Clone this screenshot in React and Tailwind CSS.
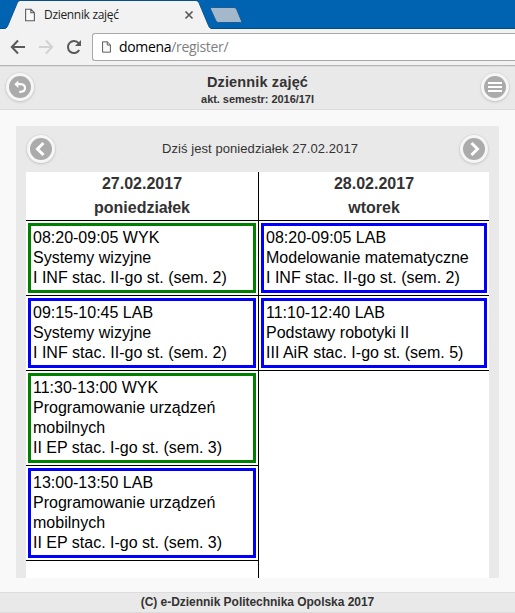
import React from "react";

const days = [
  {
    date: "27.02.2017",
    name: "poniedziałek",
    items: [
      { kind: "WYK", lines: ["08:20-09:05 WYK", "Systemy wizyjne", "I INF stac. II-go st. (sem. 2)"] },
      { kind: "LAB", lines: ["09:15-10:45 LAB", "Systemy wizyjne", "I INF stac. II-go st. (sem. 2)"] },
      { kind: "WYK", lines: ["11:30-13:00 WYK", "Programowanie urządzeń mobilnych", "II EP stac. I-go st. (sem. 3)"] },
      { kind: "LAB", lines: ["13:00-13:50 LAB", "Programowanie urządzeń mobilnych", "II EP stac. I-go st. (sem. 3)"] },
    ],
  },
  {
    date: "28.02.2017",
    name: "wtorek",
    items: [
      { kind: "LAB", lines: ["08:20-09:05 LAB", "Modelowanie matematyczne", "I INF stac. II-go st. (sem. 2)"] },
      { kind: "LAB", lines: ["11:10-12:40 LAB", "Podstawy robotyki II", "III AiR stac. I-go st. (sem. 5)"] },
    ],
  },
];

function PageIcon({ className }) {
  return (
    <svg className={className} viewBox="0 0 11 14" fill="none" stroke="#5a5a5a" strokeWidth="1.2">
      <path d="M.7.7H6.6L10.3 4.4V13.3H.7Z M6.4.7V4.6H10.3" fill="#fafafa" />
    </svg>
  );
}

function RoundButton({ label, children }) {
  return (
    <button
      aria-label={label}
      className="flex h-7 w-7 shrink-0 items-center justify-center rounded-full bg-[#f6f6f6] shadow-[0_0_0_1px_rgba(0,0,0,0.03),0_1px_3px_rgba(0,0,0,0.15)]"
    >
      <svg className="h-[22px] w-[22px]" viewBox="0 0 22 22" fill="none">
        <circle cx="11" cy="11" r="11" fill="#ababab" />
        {children}
      </svg>
    </button>
  );
}

function Lesson({ item }) {
  const color = item.kind === "WYK" ? "border-[#008000]" : "border-[#0000ff]";
  return (
    <div className="border-b border-black p-[2px]">
      <div className={"border-[3px] p-[2px] text-[16px] leading-5 text-black " + color}>
        {item.lines.map((line) => (
          <div key={line}>{line}</div>
        ))}
      </div>
    </div>
  );
}

function Browser() {
  return (
    <div className="font-['Open_Sans','Noto_Sans',sans-serif]">
      <div className="relative h-[29px] border-b border-[#0a4a85] bg-[#0063b1]">
        <svg className="absolute left-0 top-0 h-[29px] w-[250px]" viewBox="0 0 250 29">
          <path d="M0 29V28.5H5.5C7 28 7.5 26.500 8 25L17 3.500C17.600 1.800 18.500 1 20 1H196C197.800 1 198.600 2 199.300 3.500L208.500 25.500C209.300 27.500 210 28.500 212 28.500V29Z" fill="#f2f2f2" />
          <path d="M0 28.500H4C6.500 28.500 7 27 8 25L17 3.500C17.600 1.500 18.500.5 20 .5H196C197.800.5 198.600 1.500 199.300 3.500L208.500 25.500C209.300 27.500 210 28.500 212 28.500" fill="none" stroke="#0a4f8d" />
          <path d="M211.500 7.500H234Q235.800 7.500 236.500 9L241.500 21Q242 22.500 240.500 22.500H218.500Q216.700 22.500 216 21L210.500 9Q210 7.500 211.500 7.500Z" fill="#a3b9cb" stroke="#1b5c98" />
          <path d="M185.500 11.500L192.500 18.500M192.500 11.500L185.500 18.500" stroke="#5a5a5a" strokeWidth="1.700" />
        </svg>
        <div className="relative flex h-[29px] items-center pl-[25px]">
          <PageIcon className="h-[14px] w-[10px]" />
          <span className="ml-[9px] text-[12px] leading-4 tracking-[-0.32px] text-[#222]">Dziennik zajęć</span>
        </div>
      </div>
      <div className="flex h-[37px] border-b border-[#b6b4b6] bg-[#f2f2f2] pl-[10px] pt-1">
        <svg className="h-7 w-[72px]" viewBox="0 0 72 28" fill="none" strokeWidth="2">
          <path d="M15 14H2M8 7.500L1.800 14L8 20.500" stroke="#5a5a5a" />
          <path d="M29 14H42M36 7.500L42.200 14L36 20.500" stroke="#d2d2d2" />
          <path d="M69.200 17A6 6 0 1 1 68.600 10.200" stroke="#5a5a5a" />
          <path d="M71 7V13H65Z" fill="#5a5a5a" />
        </svg>
        <div className="ml-[10px] flex h-7 grow items-center rounded-l-[3px] border border-r-0 border-[#a9a9a9] bg-white pl-[9px]">
          <PageIcon className="h-3 w-[9px]" />
          <span className="ml-2 text-[14px] leading-5 tracking-[-0.32px] text-[#808080]">
            <span className="text-black">domena</span>/register/
          </span>
        </div>
      </div>
    </div>
  );
}

export default function App() {
  return (
    <div className="flex h-[613px] w-[515px] flex-col overflow-hidden bg-[#f9f9f9] font-['Liberation_Sans',Arial,sans-serif] text-[#333]">
      <Browser />
      <header className="flex h-11 items-start justify-between border-y border-[#ddd] bg-[#e9e9e9] px-[6px] pt-[6px]">
        <RoundButton label="Wstecz">
          <path d="M8 8.200H11.800C17.500 8.200 17.500 15.800 11.500 15.800H10.300" stroke="#fff" strokeWidth="2.200" />
          <path d="M5.300 8.200L9.300 4.400V12Z" fill="#fff" />
        </RoundButton>
        <div className="flex flex-col items-center font-bold">
          <h1 className="h-5 text-[14.500px] leading-[19px] tracking-[0.14px]">Dziennik zajęć</h1>
          <p className="text-[11px] leading-[13px] tracking-[-0.04px]">akt. semestr: 2016/17I</p>
        </div>
        <RoundButton label="Menu">
          <path d="M4 7H18M4 11H18M4 15H18" stroke="#fff" strokeWidth="2" />
        </RoundButton>
      </header>
      <main className="mx-4 mt-4 flex h-[452px] flex-col bg-[#e9e9e9] px-[10px]">
        <div className="flex h-[46px] items-center justify-between px-px">
          <RoundButton label="Poprzedni">
            <path d="M13.500 5L7.500 11L13.500 17" stroke="#fff" strokeWidth="3" />
          </RoundButton>
          <span className="pl-[5px] text-[13px] tracking-[0.07px]">Dziś jest poniedziałek 27.02.2017</span>
          <RoundButton label="Następny">
            <path d="M8.500 5L14.500 11L8.500 17" stroke="#fff" strokeWidth="3" />
          </RoundButton>
        </div>
        <div className="grid grow grid-cols-[233px_230px] bg-white">
          {days.map((day, i) => (
            <section key={day.date} className={i === 0 ? "border-r border-black" : ""}>
              <div className="h-[49px] border-b border-black text-center text-[16px] font-bold leading-6">
                <div>{day.date}</div>
                <div>{day.name}</div>
              </div>
              {day.items.map((item) => (
                <Lesson key={item.lines[0]} item={item} />
              ))}
            </section>
          ))}
        </div>
      </main>
      <footer className="mt-[14px] h-[21px] border-y border-[#ddd] bg-[#e9e9e9] text-center text-[12px] font-bold leading-[19px] tracking-[-0.03px]">
        (C) e-Dziennik Politechnika Opolska 2017
      </footer>
    </div>
  );
}
